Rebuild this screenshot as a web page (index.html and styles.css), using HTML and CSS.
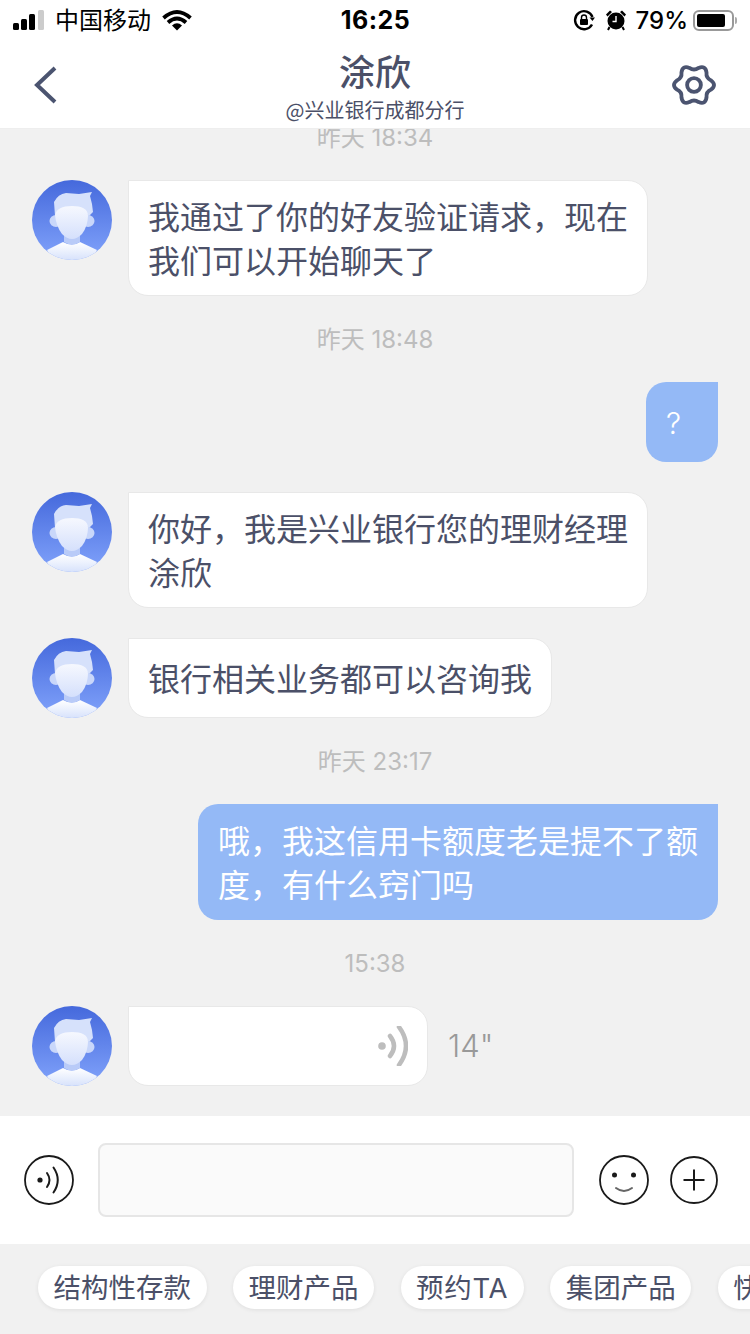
FILE: index.html
```html
<!DOCTYPE html>
<html lang="zh-CN">
<head>
    <meta charset="UTF-8">
    <meta name="viewport" content="width=device-width, initial-scale=1.0">
    <title>涂欣</title>
    <link rel="stylesheet" href="styles.css">
</head>
<body>
    <svg class="defs" aria-hidden="true">
        <defs>
            <linearGradient id="avatarBg" x1="0" y1="0" x2="0" y2="1">
                <stop offset="0" stop-color="#4569dc"/>
                <stop offset="1" stop-color="#81a3fb"/>
            </linearGradient>
            <linearGradient id="avatarFace" x1="0" y1="0" x2="0" y2="1">
                <stop offset="0" stop-color="#f6f8fe"/>
                <stop offset="1" stop-color="#d5e0fc"/>
            </linearGradient>
            <linearGradient id="avatarBody" x1="0" y1="0" x2="0" y2="1">
                <stop offset="0" stop-color="#ffffff"/>
                <stop offset="1" stop-color="#d3dffb"/>
            </linearGradient>
            <clipPath id="avatarClip"><circle cx="40" cy="40" r="40"/></clipPath>
            <symbol id="avatar" viewBox="0 0 80 80">
                <g clip-path="url(#avatarClip)">
                    <rect width="80" height="80" fill="url(#avatarBg)"/>
                    <path d="M15 70 31 62Q40 67 48 62L65 70 58 82H22Z" fill="url(#avatarBody)"/>
                    <path d="M32 54H48V62Q40 67 32 62Z" fill="#b9cbf8"/>
                    <ellipse cx="24" cy="41" rx="6.500" ry="6" fill="#c9d7fa"/>
                    <ellipse cx="56" cy="41" rx="6.500" ry="6" fill="#c9d7fa"/>
                    <path d="M23 36 22 22Q26 14 34 13L47 14 60 12 58 16 60 24 61 32 57 36Q40 20 23 36Z" fill="#d6e1fb"/>
                    <path d="M23 35Q25 26 40 26 55 26 56 35 56 46 50 54 45 59 40 59 35 59 30 54 24 46 23 35Z" fill="url(#avatarFace)"/>
                </g>
            </symbol>
        </defs>
    </svg>

    <div class="phone">
        <header class="top">
            <div class="status">
                <div class="status-side">
                    <svg class="signal" width="32" height="20" viewBox="0 0 32 20">
                        <rect x="0" y="13" width="6" height="7" rx="1.5" fill="#000"/>
                        <rect x="8" y="9" width="6" height="11" rx="1.5" fill="#000"/>
                        <rect x="16" y="4" width="6" height="16" rx="1.5" fill="#000"/>
                        <rect x="25" y="0" width="6" height="20" rx="1.5" fill="#ccc"/>
                    </svg>
                    <span class="carrier">中国移动</span>
                    <svg class="wifi" width="30" height="21" viewBox="0 0 30 21">
                        <path d="M1.500 8Q15-4 28.500 8M6 12.500Q15 4.500 24 12.500" fill="none" stroke="#000" stroke-width="3.800"/>
                        <path d="M10 15.500Q15 11 20 15.500L15 20.500Z" fill="#000"/>
                    </svg>
                </div>
                <span class="clock">16:25</span>
                <div class="status-side status-right">
                    <svg width="22" height="22" viewBox="0 0 22 22">
                        <path d="M19 15.500A9 9 0 1 1 19.500 8" fill="none" stroke="#000" stroke-width="2.400"/>
                        <path d="M16.500 8.500H22L19.500 12Z" fill="#000"/>
                        <rect x="7" y="10" width="8" height="6" rx="1" fill="#000"/>
                        <path d="M8.500 10V8.500A2.500 2.500 0 0 1 13.500 8.500V10" fill="none" stroke="#000" stroke-width="1.400"/>
                    </svg>
                    <svg class="alarm" width="22" height="22" viewBox="0 0 22 22">
                        <circle cx="11" cy="12" r="8.500" fill="#000"/>
                        <path d="M1 5.500 5 1.500 7 3 2.500 7.500ZM21 5.500 17 1.500 15 3 19.500 7.500Z" fill="#000"/>
                        <path d="M11 7V12.500H7.500" fill="none" stroke="#fff" stroke-width="1.400"/>
                        <path d="M4.500 18 3 21M17.500 18 19 21" stroke="#000" stroke-width="2"/>
                    </svg>
                    <span class="percent">79%</span>
                    <div class="battery"><div class="battery-fill"></div></div>
                    <div class="battery-cap"></div>
                </div>
            </div>
            <nav class="nav">
                <svg class="nav-icon" width="24" height="40" viewBox="0 0 24 40">
                    <path d="M21 3 3 20 21 37" fill="none" stroke="#4b5470" stroke-width="4"/>
                </svg>
                <div class="nav-title">
                    <div class="name">涂欣</div>
                    <div class="org">@兴业银行成都分行</div>
                </div>
                <svg class="nav-gear" width="44" height="44" viewBox="0 0 48 48">
                    <path d="M42.640 19Q49 24 42.640 29 36.990 31.500 37.650 37.650 36.500 45.650 29 42.640 24 39 19 42.640 11.500 45.650 10.350 37.650 11.010 31.500 5.360 29-1 24 5.360 19 11.010 16.500 10.350 10.350 11.500 2.350 19 5.360 24 9 29 5.360 36.500 2.350 37.650 10.350 36.990 16.500 42.640 19Z" fill="none" stroke="#4b5470" stroke-width="4.200"/>
                    <circle cx="24" cy="24" r="7.500" fill="none" stroke="#4b5470" stroke-width="4.200"/>
                </svg>
            </nav>
        </header>

        <main class="chat">
            <div class="time time-first">昨天 18:34</div>
            <div class="msg">
                <svg class="avatar"><use href="#avatar"/></svg>
                <div class="bubble">我通过了你的好友验证请求，现在我们可以开始聊天了</div>
            </div>
            <div class="time">昨天 18:48</div>
            <div class="msg msg-me">
                <div class="bubble bubble-me bubble-mark">?</div>
            </div>
            <div class="msg">
                <svg class="avatar"><use href="#avatar"/></svg>
                <div class="bubble">你好，我是兴业银行您的理财经理涂欣</div>
            </div>
            <div class="msg">
                <svg class="avatar"><use href="#avatar"/></svg>
                <div class="bubble">银行相关业务都可以咨询我</div>
            </div>
            <div class="time">昨天 23:17</div>
            <div class="msg msg-me">
                <div class="bubble bubble-me">哦，我这信用卡额度老是提不了额度，有什么窍门吗</div>
            </div>
            <div class="time">15:38</div>
            <div class="msg">
                <svg class="avatar"><use href="#avatar"/></svg>
                <div class="bubble bubble-voice">
                    <svg width="30" height="40" viewBox="0 0 30 40">
                        <circle cx="4" cy="20" r="3.800" fill="#bdbdbd"/>
                        <path d="M12 10Q20 20 12 30M21 1Q35 20 21 39" fill="none" stroke="#bdbdbd" stroke-width="4.500" stroke-linecap="round"/>
                    </svg>
                </div>
                <span class="duration">14"</span>
            </div>
        </main>

        <section class="inputbar">
            <svg class="round-icon" width="50" height="50" viewBox="0 0 50 50">
                <circle cx="25" cy="25" r="24" fill="none" stroke="#1a1a1a" stroke-width="1.800"/>
                <circle cx="16" cy="25" r="2.600" fill="#1a1a1a"/>
                <path d="M23 18Q28 25 23 32M29.500 12.500Q38 25 29.500 37.500" fill="none" stroke="#1a1a1a" stroke-width="2" stroke-linecap="round"/>
            </svg>
            <div class="textbox"></div>
            <svg class="round-icon smile" width="50" height="50" viewBox="0 0 50 50">
                <circle cx="25" cy="25" r="24" fill="none" stroke="#1a1a1a" stroke-width="1.800"/>
                <circle cx="15.500" cy="20" r="2.500" fill="#1a1a1a"/>
                <circle cx="34.500" cy="20" r="2.500" fill="#1a1a1a"/>
                <path d="M17 33Q25 39 33 33" fill="none" stroke="#666" stroke-width="2" stroke-linecap="round"/>
            </svg>
            <svg class="round-icon plus" width="48" height="48" viewBox="0 0 48 48">
                <circle cx="24" cy="24" r="23" fill="none" stroke="#1a1a1a" stroke-width="1.800"/>
                <path d="M13.500 24H34.500M24 13.500V34.500" fill="none" stroke="#1a1a1a" stroke-width="2"/>
            </svg>
        </section>

        <section class="chips">
            <span class="chip">结构性存款</span>
            <span class="chip">理财产品</span>
            <span class="chip chip-latin">预约TA</span>
            <span class="chip">集团产品</span>
            <span class="chip">快捷服务</span>
        </section>
    </div>
</body>
</html>
```

FILE: styles.css
```css
* { box-sizing: border-box; }
body { margin: 0; font-family: "Noto Sans CJK SC", "Noto Sans", sans-serif; color: #4b5068; }
.defs { position: absolute; width: 0; height: 0; }
.phone { width: 750px; height: 1334px; display: flex; flex-direction: column; overflow: hidden; background: #f1f1f1; }

/* header */
.top { height: 128px; background: #fff; position: relative; z-index: 1; flex: none; box-shadow: 0 1px 0 #eee; }
.status { height: 40px; display: flex; align-items: center; justify-content: space-between; padding: 0 13px; color: #000; }
.status-side { flex: 1; display: flex; align-items: center; }
.status-right { justify-content: flex-end; }
.signal { margin-right: 10px; }
.carrier { font-size: 24px; line-height: 38px; height: 40px; }
.wifi { margin-left: 11px; }
.clock { font-family: Inter, "Liberation Sans", sans-serif; font-size: 25px; font-weight: 700; letter-spacing: 0.5px; margin-left: 1px; }
.alarm { margin-left: 10px; }
.percent { font-family: Inter, "Liberation Sans", sans-serif; font-size: 24px; font-weight: 500; margin: 0 5px 0 9px; }
.battery { width: 41px; height: 21px; border: 2px solid #999; border-radius: 6px; padding: 2px; }
.battery-fill { width: 28px; height: 13px; background: #000; border-radius: 2px; }
.battery-cap { width: 2px; height: 7px; background: #aaa; border-radius: 0 2px 2px 0; margin-left: 1px; }

.nav { height: 88px; display: grid; grid-template-columns: 1fr auto 1fr; align-items: center; padding: 0 34px; }
.nav-icon { margin-top: 2px; }
.nav-gear { margin-top: 2px; justify-self: end; }
.nav-title { text-align: center; }
.name { font-size: 36px; line-height: 54px; font-weight: 500; }
.org { font-size: 20px; line-height: 26px; height: 28px; }

/* messages */
.chat { flex: 1; min-height: 0; overflow: hidden; padding: 0 32px; }
.time { font-family: Inter, "Noto Sans CJK SC", sans-serif; font-size: 24px; line-height: 28px; padding-top: 2px; margin: 28px 0; text-align: center; color: #bdbdbd; }
.time-first { margin-top: -6px; }
.msg { display: flex; align-items: flex-start; margin-bottom: 30px; }
.msg:has(+ .time) { margin-bottom: 0; }
.msg-me { justify-content: flex-end; }
.avatar { width: 80px; height: 80px; flex: none; margin-right: 16px; }
.bubble { max-width: 520px; min-height: 80px; display: flex; align-items: center; padding: 12px 19px 14px; border: 1px solid #e8e8e8; border-radius: 0 20px 20px 20px; background: #fff; font-size: 32px; line-height: 44px; }
.bubble-me { padding: 13px 20px 15px; border: 0; border-radius: 20px 0 20px 20px; background: #94b9f6; color: #fff; }
.bubble-mark { width: 72px; padding-top: 15px; padding-bottom: 13px; font-family: Inter, sans-serif; font-size: 30px; font-weight: 300; }
.bubble-voice { width: 300px; padding: 13px 19px; justify-content: flex-end; }
.duration { margin: 20px 0 0 20px; font-family: Inter, sans-serif; font-size: 31px; font-weight: 300; line-height: 40px; color: #999; }

/* input row */
.inputbar { height: 128px; flex: none; background: #fff; display: flex; align-items: center; padding: 0 31px 0 24px; }
.textbox { width: 476px; height: 74px; margin: 0 25px 0 24px; background: #fafafa; border: 2px solid #e6e6e6; border-radius: 8px; }
.plus { margin-left: 21px; }

/* shortcut chips */
.chips { height: 90px; flex: none; display: flex; gap: 26.5px; padding: 22px 0 0 38px; overflow: hidden; }
.chip { flex: none; height: 43px; padding: 0 15.5px; border-radius: 22px; background: #fff; box-shadow: 0 1px 4px rgba(0,0,0,.08); font-family: Inter, "Noto Sans CJK SC", sans-serif; font-size: 27.5px; line-height: 45px; white-space: nowrap; }
.chip-latin { letter-spacing: 0.7px; }
```
